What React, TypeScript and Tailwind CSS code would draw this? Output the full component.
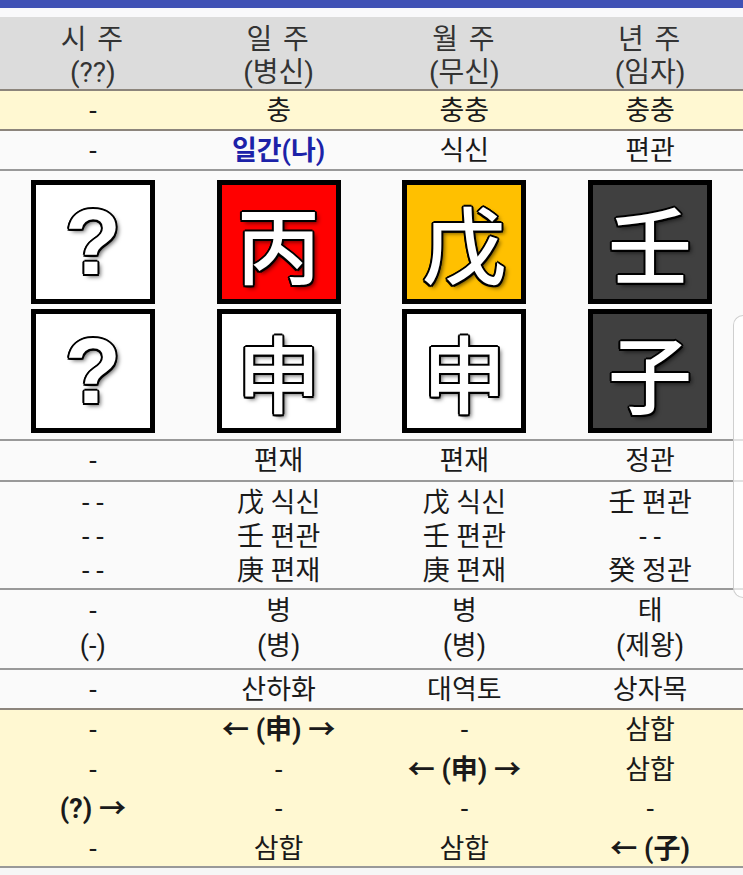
import React from 'react';

type Pillar = {
  title: string;
  sub: string;
  chung: string;
  sipsin: React.ReactNode;
  stem: { ch: string; bg: string };
  branch: { ch: string; bg: string };
  branchSipsin: string;
  hidden: string[];
  unsung: [string, string];
  napeum: string;
  hap: React.ReactNode[];
};

const glyphShadow =
  '[text-shadow:0_0_2px_#000,1.5px_1.5px_0_#000,-1.5px_-1.5px_0_#000,1.5px_-1.5px_0_#000,-1.5px_1.5px_0_#000,0_2px_0_#000,2px_0_0_#000,0_-2px_0_#000,-2px_0_0_#000,3px_3px_4px_rgba(0,0,0,0.6)]';

const Arrow = ({ children }: { children: React.ReactNode }) => <span className="font-bold">{children}</span>;

const pillars: Pillar[] = [
  {
    title: '시 주',
    sub: '(??)',
    chung: '-',
    sipsin: '-',
    stem: { ch: '?', bg: 'bg-white' },
    branch: { ch: '?', bg: 'bg-white' },
    branchSipsin: '-',
    hidden: ['- -', '- -', '- -'],
    unsung: ['-', '(-)'],
    napeum: '-',
    hap: ['-', '-', <Arrow key="a">(?) →</Arrow>, '-'],
  },
  {
    title: '일 주',
    sub: '(병신)',
    chung: '충',
    sipsin: <span className="font-semibold text-[#1c22a8]">일간(나)</span>,
    stem: { ch: '丙', bg: 'bg-[#ff0000]' },
    branch: { ch: '申', bg: 'bg-white' },
    branchSipsin: '편재',
    hidden: ['戊 식신', '壬 편관', '庚 편재'],
    unsung: ['병', '(병)'],
    napeum: '산하화',
    hap: [<Arrow key="a">← (申) →</Arrow>, '-', '-', '삼합'],
  },
  {
    title: '월 주',
    sub: '(무신)',
    chung: '충충',
    sipsin: '식신',
    stem: { ch: '戊', bg: 'bg-[#ffc000]' },
    branch: { ch: '申', bg: 'bg-white' },
    branchSipsin: '편재',
    hidden: ['戊 식신', '壬 편관', '庚 편재'],
    unsung: ['병', '(병)'],
    napeum: '대역토',
    hap: ['-', <Arrow key="a">← (申) →</Arrow>, '-', '삼합'],
  },
  {
    title: '년 주',
    sub: '(임자)',
    chung: '충충',
    sipsin: '편관',
    stem: { ch: '壬', bg: 'bg-[#404040]' },
    branch: { ch: '子', bg: 'bg-[#404040]' },
    branchSipsin: '정관',
    hidden: ['壬 편관', '- -', '癸 정관'],
    unsung: ['태', '(제왕)'],
    napeum: '상자목',
    hap: ['삼합', '삼합', '-', <Arrow key="a">← (子)</Arrow>],
  },
];

const GlyphBox = ({ ch, bg }: { ch: string; bg: string }) => (
  <div className={`w-[124px] h-[124px] border-[5px] border-black ${bg} flex items-center justify-center`}>
    {ch === '?' ? (
      <span className={`font-['Liberation_Sans',sans-serif] font-bold text-[92px] leading-none text-white ${glyphShadow}`}>?</span>
    ) : (
      <span className={`font-['Noto_Sans_CJK_KR',sans-serif] font-medium text-[84px] leading-none text-white ${glyphShadow}`}>{ch}</span>
    )}
  </div>
);

export default function App() {
  return (
    <div className="relative min-h-[875px] bg-[#f6f6f6] font-['Roboto','Noto_Sans_CJK_KR',sans-serif] text-[27px] text-[#1a1a1a]">
      <div className="h-[8px] bg-[#3f51b5]" />
      <div className="h-[9px] bg-[#f9f9fb]" />

      {/* header */}
      <div className="grid grid-cols-4 h-[74px] bg-[#dcdcdc] border-b-2 border-[#8c857c] text-[#333] text-[28px] text-center leading-[33px] pt-[6px]">
        {pillars.map((p) => (
          <div key={p.title}>
            <div className="tracking-[2px]">{p.title}</div>
            <div>{p.sub}</div>
          </div>
        ))}
      </div>

      {/* 충 */}
      <div className="grid grid-cols-4 h-[40px] bg-[#fff8d2] border-b-2 border-[#8c857c] items-center text-center">
        {pillars.map((p) => (
          <div key={p.title}>{p.chung}</div>
        ))}
      </div>

      {/* 십신 */}
      <div className="grid grid-cols-4 h-[40px] bg-[#fafafa] border-b-2 border-[#999] items-center text-center">
        {pillars.map((p) => (
          <div key={p.title}>{p.sipsin}</div>
        ))}
      </div>

      {/* 천간 / 지지 */}
      <div className="grid grid-cols-4 h-[270px] bg-[#fafafa] border-b-2 border-[#999] pt-[9px]">
        {pillars.map((p) => (
          <div key={p.title} className="flex flex-col items-center gap-[5px]">
            <GlyphBox {...p.stem} />
            <GlyphBox {...p.branch} />
          </div>
        ))}
      </div>

      {/* 지지 십신 */}
      <div className="grid grid-cols-4 h-[41px] bg-[#fafafa] border-b-2 border-[#999] items-center text-center">
        {pillars.map((p) => (
          <div key={p.title}>{p.branchSipsin}</div>
        ))}
      </div>

      {/* 지장간 */}
      <div className="grid grid-cols-4 h-[108px] bg-[#fafafa] border-b-2 border-[#999] text-center leading-[34px] pt-[4px]">
        {pillars.map((p) => (
          <div key={p.title}>
            {p.hidden.map((h, i) => (
              <div key={i}>{h}</div>
            ))}
          </div>
        ))}
      </div>

      {/* 12운성 */}
      <div className="grid grid-cols-4 h-[80px] bg-[#fafafa] border-b-2 border-[#999] text-center leading-[35px] pt-[4px]">
        {pillars.map((p) => (
          <div key={p.title}>
            <div>{p.unsung[0]}</div>
            <div>{p.unsung[1]}</div>
          </div>
        ))}
      </div>

      {/* 납음 */}
      <div className="grid grid-cols-4 h-[40px] bg-[#fafafa] border-b-2 border-[#8c857c] items-center text-center">
        {pillars.map((p) => (
          <div key={p.title}>{p.napeum}</div>
        ))}
      </div>

      {/* 합 */}
      <div className="grid grid-cols-4 h-[158px] bg-[#fff8d2] border-b-2 border-[#999] text-center leading-[39.5px] pt-[1px]">
        {pillars.map((p) => (
          <div key={p.title}>
            {p.hap.map((h, i) => (
              <div key={i}>{h}</div>
            ))}
          </div>
        ))}
      </div>

      {/* fast-scroll handle */}
      <div className="absolute right-0 top-[315px] w-[10px] h-[283px] rounded-l-[10px] border border-r-0 border-[#cfcfcf] bg-white/70" />
    </div>
  );
}
